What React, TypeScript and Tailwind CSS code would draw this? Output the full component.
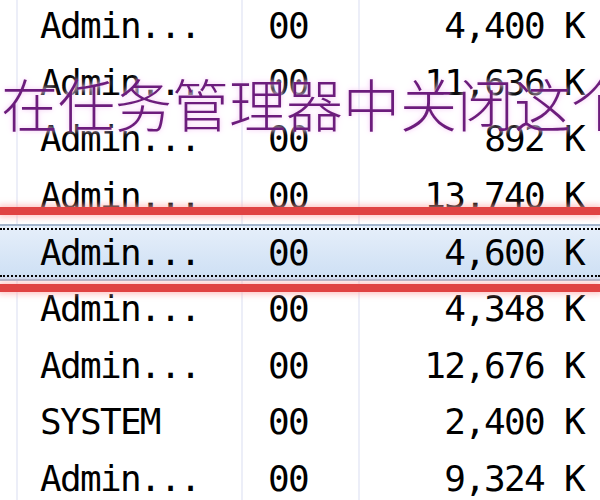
const rows = [
  { name: "Admin...", cpu: "00", mem: "4,400 K" },
  { name: "Admin...", cpu: "00", mem: "11,636 K" },
  { name: "Admin...", cpu: "00", mem: "892 K" },
  { name: "Admin...", cpu: "00", mem: "13,740 K" },
  { name: "Admin...", cpu: "00", mem: "4,600 K", selected: true },
  { name: "Admin...", cpu: "00", mem: "4,348 K" },
  { name: "Admin...", cpu: "00", mem: "12,676 K" },
  { name: "SYSTEM", cpu: "00", mem: "2,400 K" },
  { name: "Admin...", cpu: "00", mem: "9,324 K" },
];

const mono = "font-['DejaVu_Sans_Mono','Liberation_Mono',monospace] text-[36px] tracking-[-1.7px] leading-none text-black";

const App = () => {
  return (
    <div className="relative w-[600px] h-[500px] overflow-hidden bg-white">
      <div className="-mt-[2px]">
        {rows.map((r, i) =>
          r.selected ? (
            <div key={i} className="h-[56.6px] border-y-2 border-[#a3b5cc] bg-gradient-to-b from-[#e6effa] to-[#cddff4] py-[2px]">
              <div className="h-full grid grid-cols-[18px_225px_117px_1fr] items-center border-y-2 border-dotted border-black">
                <div />
                <div className={`pl-[22px] ${mono}`}>{r.name}</div>
                <div className={`pl-[25px] ${mono}`}>{r.cpu}</div>
                <div className={`text-right pr-[16px] ${mono}`}>{r.mem}</div>
              </div>
            </div>
          ) : (
            <div key={i} className="h-[56.6px] grid grid-cols-[18px_225px_117px_1fr] items-stretch">
              <div className="border-r-2 border-[#eceef8]" />
              <div className={`flex items-center pl-[22px] border-r-2 border-[#eceef8] ${mono}`}>{r.name}</div>
              <div className={`flex items-center pl-[25px] border-r-2 border-[#eceef8] ${mono}`}>{r.cpu}</div>
              <div className={`flex items-center justify-end pr-[16px] ${mono}`}>{r.mem}</div>
            </div>
          )
        )}
      </div>

      {/* red annotation lines */}
      <div className="absolute left-0 right-0 top-[207px] h-[8px] bg-[#e04343] shadow-[0_0_6px_2px_rgba(255,170,170,0.7)]" />
      <div className="absolute left-0 right-0 top-[284px] h-[8px] bg-[#e04343] shadow-[0_0_6px_2px_rgba(255,170,170,0.7)]" />

      {/* purple caption */}
      <div className="absolute left-[1px] top-[74px] whitespace-nowrap font-['Noto_Sans_CJK_SC',sans-serif] font-light text-[57px] leading-none text-[#6c1c7c] [text-shadow:0_0_4px_#f6d2f6,0_0_8px_#fbe6fb]">
        在任务管理器中关闭这个
      </div>
    </div>
  );
};

export default App;
